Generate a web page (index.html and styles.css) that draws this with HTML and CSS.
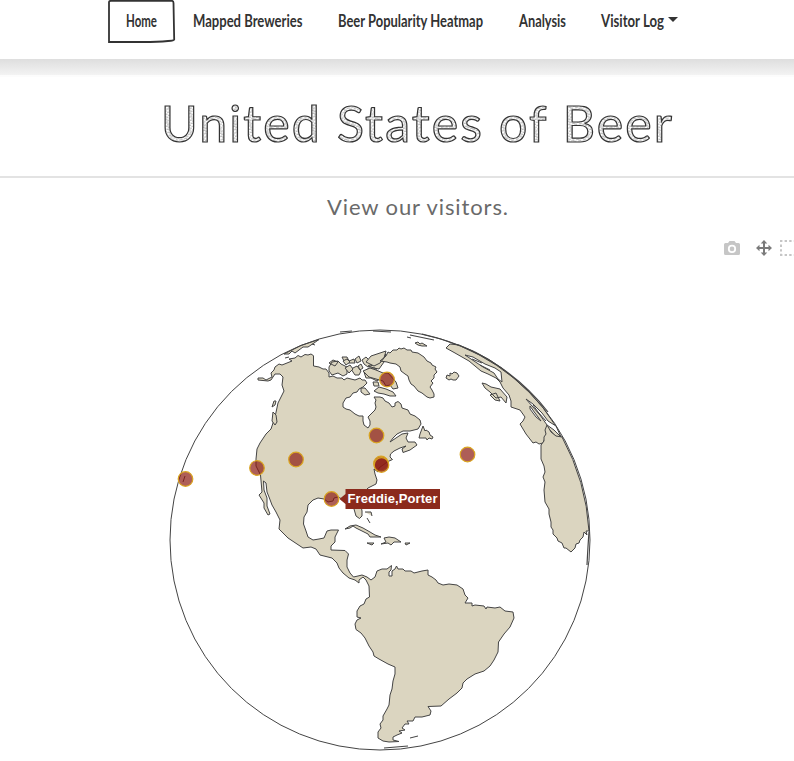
FILE: index.html
```
<!DOCTYPE html>
<html lang="en">
<head>
<meta charset="utf-8">
<title>United States of Beer</title>
<link rel="stylesheet" href="styles.css">
</head>
<body>
<nav class="navbar">
  <a class="nav-link active"><svg width="32" height="42"><text x="0" y="27" textLength="31" lengthAdjust="spacingAndGlyphs">Home</text></svg>
    <svg class="sketch-frame" width="68" height="44" viewBox="0 0 68 44"><path d="M3 .8H64Q65.500 1 65.500 3L66.200 39.500Q66 40.700 60 41Q50 42 35 42H1V2Q1 .8 3 .8Z" fill="none" stroke="#333" stroke-width="1.8"/></svg></a>
  <a class="nav-link"><svg width="110" height="42"><text x="0" y="27" textLength="109.500" lengthAdjust="spacingAndGlyphs">Mapped Breweries</text></svg></a>
  <a class="nav-link"><svg width="145" height="42"><text x="0" y="27" textLength="145" lengthAdjust="spacingAndGlyphs">Beer Popularity Heatmap</text></svg></a>
  <a class="nav-link"><svg width="47" height="42"><text x="0" y="27" textLength="47" lengthAdjust="spacingAndGlyphs">Analysis</text></svg></a>
  <a class="nav-link"><svg width="63" height="42"><text x="0" y="27" textLength="63" lengthAdjust="spacingAndGlyphs">Visitor Log</text></svg><i class="caret"></i></a>
</nav>
<div class="band"></div>
<h1 class="title">
  <svg width="794" height="100" viewBox="0 77 794 100">
    <defs><pattern id="hatch" width="5" height="3.300" patternUnits="userSpaceOnUse" patternTransform="rotate(-14)"><rect width="5" height="3.300" fill="#fff"/><path d="M0 1H3.500M2 2.600H5" stroke="#555" stroke-width=".5"/></pattern></defs>
    <text x="161" y="142" textLength="511">United States of Beer</text>
  </svg>
</h1>
<h2 class="subtitle">
  <svg width="794" height="46" viewBox="0 179 794 46"><text x="327" y="215.500" textLength="181">View our visitors.</text></svg>
</h2>
<main class="map">
<svg width="794" height="536" viewBox="0 225 794 536">
  <g class="tools">
    <path fill="#c6c6c6" fill-rule="evenodd" d="M725.500 243H728L729.500 241H734.500L736 243H738.500Q740 243 740 244.500V253.500Q740 255 738.500 255H725.500Q724 255 724 253.500V244.500Q724 243 725.500 243ZM732 244.800A4.100 4.100 0 1 0 732 253A4.100 4.100 0 1 0 732 244.800ZM732 246.600A2.300 2.300 0 1 1 732 251.200A2.300 2.300 0 1 1 732 246.600Z"/>
    <path fill="#7b7b7b" d="M764 240L767.300 243.500H765V247H768.500V244.700L772 248L768.500 251.300V249H765V252.500H767.300L764 256L760.700 252.500H763V249H759.500V251.300L756 248L759.500 244.700V247H763V243.500H760.700Z"/>
    <path fill="none" stroke="#c6c6c6" stroke-width="2" stroke-dasharray="2.400 2.200" d="M780 241H794M780 255H794M781 244.600V254"/>
  </g>
  <g class="land">
    <path d="M258 378L263 378 266 380 270 378 272 377 271 373 274 370 275 367 279 364 282 365 287 363 292 361 289 359 295 358 298 355.500 301 357 305 354.500 308 355 311 354 313.500 355.700 313.500 366 319 367 323 369 326 369 329 373 329 377 333 376 337 378 342 378 344 380 347 378 351 379 355 380 360 378 362 380 365 380 367 383 363 387 359 389 357 392 353 393 350 397 346 398 343 403 343 407 346 409 350 410 355 414 359 416 363 416 363 421 364 425 368 428 370 425 370 421 368 417 372 413 375 410 376 407 375 403 376 400 374 397 380 397 383 398 385 401 389 403 392 407 395 406 395 403 398 401.500 401 404 402 408 408 410 410 414 415 416 420 420 421 424 418 429 410 431 403 431 397 434 393 438 390 442 396 438 402 434 408 433 406 438 408 442 415 442 417 445 410 450 403 452.500 402 449 406 446 400 448 394 451 390.500 454 390 457 392.500 459.500 388 461.500 383 465 379 468 378 472 374 469 375 474 377 480 376 484 368 488 362 494 360 500 362 511 362 516 359.500 518.500 356 516 354 509 350 500 342 499 338 497 334 498 333 501 328 502 324 499 318 498 313 500 308 505 307 512 304 517 303.500 524 306 531 308 537 313 540 319 539 324 538 327 531 331 530 338.500 530 335 537 335 542 331 546 331 550 345 550.500 348.500 554 347 560 347 567 350 573 353.500 577 358 576 362 575 367 577 371 580 375 577 377 571 382 569 387 569 391.500 565.500 391 570 389 572 389 576 392 576 392 571 395 569 396.500 566 398 569 403 569 405 571 411 571 414 573 422 571 428 570 428 575 432 577 436 580 438 583 443 585 449 584 457 585 463 589 465 595 468 598 465 603 472 603 472 606 475 605 484 606 486 609 487 607 495 608 500 607 505 611 513 612 514 618 510 627 504 634 498.500 642 498 652 494 660 490 666 484 671 475 674 467 679 463 683 462 688 457 693 449 699 441 706 428 706.500 431 711 430 715 422 717 415 717 413 721 407 721 409 724 405 724 402 728 405 730 399 731 402 733 397 735 393 737 393 740 399 741.500 389 742 383 741 378 738 378 732 381 728 380 724 383 720 383 716 387 709 389 705 390 695 392 689 393 681 395 674 395 667 388 664 379 659 374 656 373 652 369 646 365 638 361 633 356 629.500 355 624 357 620 361 618 357 617 357 611 360 606 364 604 366 599 369.500 597 369 586 366 580 363 577 359 580 359 583 355 580 349 578 343 573 339 568 337 563 332 558 320 555 316 549 311 547 303 548 297 544 288 538 279 529 280 520 276 512 272 505 269 497 267 492 266 483 263.500 481 264 490 267 498 267 506 270 514 268 515 264 508 264 503 259 495 262 492 260.500 475 256 466 256 459 257 449 260 443 266 434 271 429 275 417 278 403 284 391 282 385 283 377 280 374 275 374 271 380 268 381 258 380Z"/>
    <path d="M285 353.500Q301 344 319 339.500L314 343 308 347 303 347 299 350 295 353 292 351 289 354 284 354ZM272 407L274 401 276 401 275 405ZM273 412L276 415 277 422 275 425 272 421ZM312 344L315 345M285 358L289 357"/>
    <path d="M329 367L332 362 338 361 341 364 347 367 347 374 343 376 338 373 332 375 329 371ZM329 363L333 360 338 362 335 366ZM342 357L347 357 349 361 354 359 355 363 345 363ZM351 369L357 366 361 371 359 375 355 375 353 372ZM355 359L359 356 361 361 357 363ZM362 360L366 357 370 361 373 365 368 367 364 364ZM364 372L369 368 375 368 378 372 381 378 377 381 371 378 366 378ZM361 388L365 388 370 394 365 395 361 392ZM373 382L378 382 379 386 374 386ZM368 366L374 363 381 361 379 356 384 352 382 358 386 354 384 362 379 369 374 368Z"/>
    <path d="M363 371L370 368 376 370 383 373 388 373 396 382 398 388 393 389 390 385 386 386 383 381 376 379 369 377ZM374 391L379 387 386 389 393 392 396 396 390 396 384 394 378 393ZM366 362L371 356 377 354 386 351 384 358 380 363 374 366ZM345 368L350 365 353 369 349 373ZM343 361L347 359 350 362 346 365ZM358 366L361 364 363 368 360 370ZM380 361L386 356 388 352 390 353 393 350 397 350 399 348 401 349 404 348 407 350 411 350 412 352 418 353 424 357 427 361 431 363 432 365 436 367 435 369 437 372 434 375 434 378 431 381 433 383 430 387 432 390 434 394 434 397 430 398 427 397 422 393 418 391 414 386 411 384 409 380 408 376 405 374 401 371 400 367 396 364 390 363 387 362ZM447 375L450 376 450 373 452 374 454 372 457 373 459 376 456 380 453 380 451 379 449 380 446 378ZM415 343L418 342 420 344 422 343 427 346 422 346 418 345ZM420 434L423 426 425 431 426 430 429 432 430 435 433 437 432 439 429 438 427 440 426 438 419 438Z"/>
    <path d="M446 348L450 344 459 345Q491 357 515 379Q548 407 562 439L556 437 550 430 545 438 543 443 539 444 536 442 533 443 526 434 520 424 523 421 525 417 520 410 511 407 511 401 509 395 503 388 500 382 496 378 488 374 481 371 469 361 455 353Z"/>
    <path d="M482 383L486 384 491 387 500 389 507 397 506 403 501 397 496 398 490 392 485 388ZM490 395L496 393 500 401 495 400 491 396Z"/>
    <path d="M541 445L544 441 544 437 546 434 545 430 547 425 551 432 556 436 562 437Q586 481 589 531L586 531 587 535 584 532 583 537 580 540 579 543 576 544 575 548 571 552 566 548 564 548 562 543 558 541 557 538 553 534 553 530 551 527 551 522 549 514 549 509 545 502 544 490 545 482 543 477 545 472 544 466 541 459Z"/>
    <path class="water" d="M465 355L473 357 485 364 495 368 501 372 502 382 498 379 494 373 483 367ZM526 399L533 404 542 413 548 421 556 426 561 437 554 430 547 425 540 415 532 406ZM530 406L535 413 541 421 536 417 530 409ZM533 405L538 412 546 421"/>
    <path d="M345 529L350 526 356 525 363 528 370 532 375 535 381 537 370 537 368 534 362 531 356 528 353 526 350 528ZM384 538L389 537 395 538 398 540 401 542 394 542 391 545 388 543 381 544 386 542ZM367 543L374 543 372 545ZM405 543L410 543 406 545ZM365 512L371 512 372 516M367 518L370 523"/>
    <path fill="none" d="M480 365L490 370M472 359L482 363M410 738L418 736M407 337L411 338M185 476L183 482"/>
  </g>
  <path class="rim" d="M422 334Q448 340 470 350Q517 372 548 412M340 332L352 331M373 331L391 332M410 335L434 340M384 748L408 746M587 565Q588 545 589 532"/>
  <circle cx="380" cy="540" r="210" fill="none" stroke="#444"/>
  <g class="marks">
    <circle cx="387" cy="379.500" r="7.300"/><circle cx="376.500" cy="435.500" r="7.300"/><circle cx="467.500" cy="454.500" r="7.300"/><circle cx="296" cy="459.500" r="7.300"/><circle cx="257" cy="468" r="7.300"/><circle cx="185.500" cy="479" r="7.300"/><circle cx="331.500" cy="499" r="7.300"/><circle cx="381" cy="463.500" r="7.300"/><circle cx="381.500" cy="465" r="7.300"/>
  </g>
  <path d="M339.500 499L345.500 494V489H440V509H345.500V504Z" fill="#8b2a1c"/>
  <text class="tip" x="347.500" y="503" textLength="90">Freddie,Porter</text>
</svg>
</main>
</body>
</html>
```
FILE: styles.css
```
body { margin: 0; background: #fff; color: #333; overflow: hidden; }
.navbar { height: 59px; padding-left: 108px; display: flex; align-items: flex-start; }
.nav-link { position: relative; display: flex; padding: 0 17.700px; font: bold 16.500px Lato, sans-serif; }
.nav-link svg { display: block; fill: #333; overflow: visible; }
.nav-link .sketch-frame { position: absolute; left: 0; top: 0; }
.caret { width: 0; height: 0; margin: 17px 0 0 4px; border: 5px solid transparent; border-top-color: #333; border-bottom: 0; }
.band { height: 16px; border-bottom: 2px solid #fcfcfc; background: linear-gradient(#dedede, #f3f3f3); }
.title, .subtitle { margin: 0; }
.title { height: 99px; border-bottom: 2px solid #e3e3e3; }
.title svg, .subtitle svg, .map svg { display: block; }
.title text { font: 400 50px Lato, sans-serif; fill: url(#hatch); stroke: #333; stroke-width: 1.200px; }
.subtitle { height: 47px; }
.subtitle text { font: 400 22px Lato, sans-serif; fill: #6a6a6a; }
.map { height: 536px; }
.land { fill: #dbd5c0; stroke: #444; stroke-width: 1px; stroke-linejoin: round; }
.land .water { fill: #fff; }
.rim { fill: none; stroke: #444; stroke-width: 1.200px; }
.marks { fill: #8b1a10; fill-opacity: .7; stroke: #daa520; stroke-width: 1.200px; }
.tip { font: bold 13px "Liberation Sans", sans-serif; fill: #fff; }
```
